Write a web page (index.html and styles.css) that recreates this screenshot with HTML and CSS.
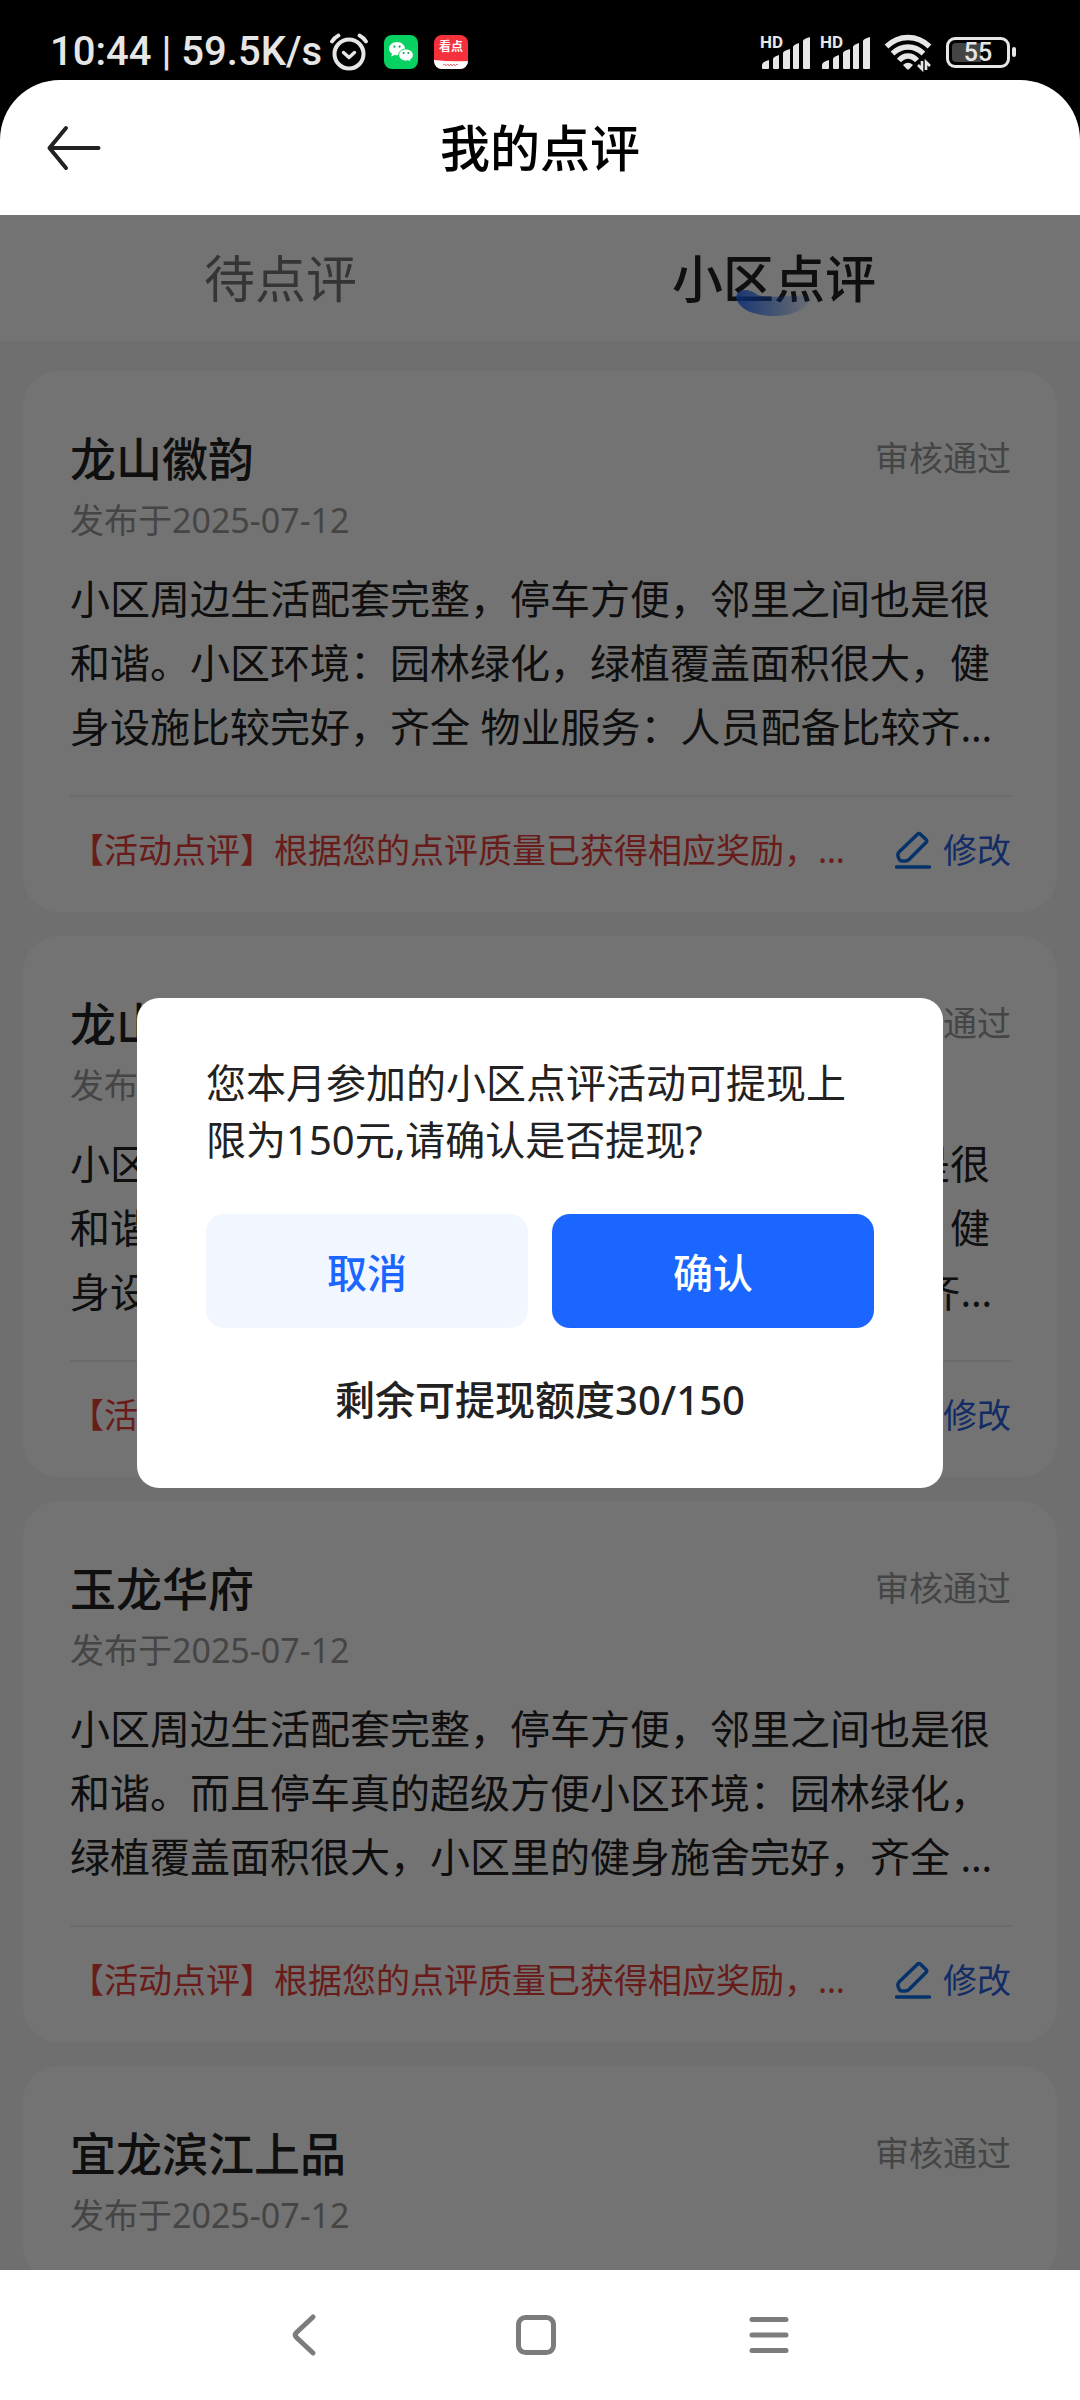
FILE: index.html
```html
<!DOCTYPE html>
<html lang="zh-CN">
  <head>
    <meta charset="UTF-8" />
    <meta name="viewport" content="width=device-width, initial-scale=1.0" />
    <title>我的点评</title>
    <link rel="stylesheet" href="styles.css">
  </head>
  <body>
    <div class="status-bar">
      <div class="status-left">
        <span class="clock">10:44 | 59.5K/s</span>
        <svg class="alarm" viewBox="0 0 40 38" width="40" height="38">
          <g fill="none" stroke="#e6e6e6" stroke-linecap="round" stroke-linejoin="round">
            <circle cx="20" cy="21" r="14.5" stroke-width="4" />
            <path d="M14.5 19.5l5.5 5 5.5-5" stroke-width="3.4" />
            <path d="M3 8.5Q5.5 4.5 9.5 2.5M37 8.5Q34.5 4.5 30.5 2.5" stroke-width="3.8" />
          </g>
        </svg>
        <svg class="app-icon" viewBox="0 0 34 34" width="34" height="34">
          <rect width="34" height="34" rx="8" fill="#07d160" />
          <path d="M13 7C8.600 7 5 9.900 5 13.600c0 2.100 1.200 3.900 3 5.100l-.8 2.800 3.200-1.600c.8.2 1.700.3 2.600.3 4.400 0 8-2.900 8-6.600S17.400 7 13 7z" fill="#fff" />
          <path d="M22 14c-4 0-7.300 2.700-7.300 6s3.300 6 7.300 6c.8 0 1.600-.1 2.300-.3l2.700 1.500-.6-2.500c1.800-1.100 2.900-2.800 2.900-4.700 0-3.300-3.300-6-7.300-6z" fill="#fff" stroke="#07d160" />
          <g fill="#07a04e">
            <circle cx="10.400" cy="11.600" r="1.100" /><circle cx="15.600" cy="11.600" r="1.100" />
            <circle cx="19.600" cy="18" r="1" /><circle cx="24.400" cy="18" r="1" />
          </g>
        </svg>
        <div class="news-icon">
          <span class="news-name">看点</span>
          <svg class="news-strip" viewBox="0 0 34 9" width="34" height="9">
            <path d="M0 0Q17 2 34 1V9H0z" fill="#fff" />
            <path d="M9 5l2-1 1 2 2-2 1 2 2-2 1 2 2-2 1 2 2-2 1 1" fill="none" stroke="#f5767c" />
          </svg>
        </div>
      </div>
      <div class="status-right">
        <svg viewBox="0 0 52 36" width="52" height="36">
          <text class="hd" x="0" y="14">HD</text>
          <g fill="#e6e6e6">
            <path d="M2 34v-3q0-3 7-5v8q0 1-1 1H3q-1 0-1-1z" />
            <path d="M13 34V25q0-2 6-4v13q0 1-1 1h-4q-1 0-1-1z" />
            <path d="M23 34V19q0-2 7-4v19q0 1-1 1h-5q-1 0-1-1z" />
            <path d="M33 34V13q0-2 6-4v25q0 1-1 1h-4q-1 0-1-1z" />
            <path d="M43 34V7q0-2 7-4v31q0 1-1 1h-5q-1 0-1-1z" />
          </g>
        </svg>
        <svg viewBox="0 0 52 36" width="52" height="36">
          <text class="hd" x="0" y="14">HD</text>
          <g fill="#e6e6e6">
            <path d="M2 34v-3q0-3 7-5v8q0 1-1 1H3q-1 0-1-1z" />
            <path d="M13 34V25q0-2 6-4v13q0 1-1 1h-4q-1 0-1-1z" />
            <path d="M23 34V19q0-2 7-4v19q0 1-1 1h-5q-1 0-1-1z" />
            <path d="M33 34V13q0-2 6-4v25q0 1-1 1h-4q-1 0-1-1z" />
            <path d="M43 34V7q0-2 7-4v31q0 1-1 1h-5q-1 0-1-1z" />
          </g>
        </svg>
        <svg class="wifi" viewBox="0 0 48 36" width="48" height="36">
          <g fill="none" stroke="#e6e6e6" stroke-width="5.400">
            <path d="M2.500 12.500Q12 3.500 24 3.500T45.500 12.500" />
            <path d="M8.500 19.500Q15.500 13 24 13T39.500 19.500" />
            <path d="M15 26.500Q19 22 24 22T33 26.500" />
          </g>
          <path d="M19 31q5-4.500 10 0l-4 4.200q-1 .8-2 0z" fill="#e6e6e6" />
          <path d="M38 27v8l-4-4M42 36v-8l4 4" fill="none" stroke="#e6e6e6" stroke-width="2.600" />
        </svg>
        <div class="battery">
          <div class="battery-body"><span class="battery-level">55</span></div>
          <div class="battery-tip"></div>
        </div>
      </div>
    </div>

    <header class="header">
      <button class="back" type="button" aria-label="返回">
        <svg viewBox="0 0 56 46" width="56" height="46">
          <path d="M20 3L3.500 23 20 43M3.500 23H52.500" fill="none" stroke="#222" stroke-width="4" stroke-linecap="round" stroke-linejoin="round" />
        </svg>
      </button>
      <h1>我的点评</h1>
    </header>

    <main class="content">
      <nav class="tabs">
        <button class="tab" type="button">待点评</button>
        <button class="tab active" type="button">小区点评
          <svg class="tab-mark" viewBox="0 0 80 28" width="80" height="28">
            <defs>
              <linearGradient id="mark" x1="0" x2="1">
                <stop offset="0" stop-color="#1a66ff" stop-opacity="0.85" />
                <stop offset="0.5" stop-color="#1a66ff" stop-opacity="0.45" />
                <stop offset="1" stop-color="#1a66ff" stop-opacity="0" />
              </linearGradient>
            </defs>
            <path d="M0 9Q1 1 9 1Q15 1 22 6Q34 10 80 5Q68 27 38 27Q5 26 0 9z" fill="url(#mark)" />
          </svg>
        </button>
      </nav>

      <div class="list">
        <article class="card">
          <div class="card-head">
            <h2>龙山徽韵</h2>
            <span class="state">审核通过</span>
          </div>
          <p class="date">发布于2025-07-12</p>
          <p class="text">小区周边生活配套完整，停车方便，邻里之间也是很和谐。小区环境：园林绿化，绿植覆盖面积很大，健身设施比较完好，齐全 物业服务：人员配备比较齐全，服务态度也很好</p>
          <div class="card-foot">
            <p class="reward">【活动点评】根据您的点评质量已获得相应奖励，感谢您的参与</p>
            <button class="edit" type="button">
              <svg viewBox="0 0 36 38" width="36" height="38">
                <path d="M22.500 3.300q1.500-1.500 3 0l5.500 5.200q1.500 1.500 0 3L14 28.500q-1.500 1.500-4 1.500H7q-2 0-3-2l-1-3q-.5-2 1-4zM1.500 36h33" fill="none" stroke="#0c6fe8" stroke-width="3.500" stroke-linecap="round" stroke-linejoin="round" />
              </svg>
              修改
            </button>
          </div>
        </article>

        <article class="card">
          <div class="card-head">
            <h2>龙山徽韵</h2>
            <span class="state">审核通过</span>
          </div>
          <p class="date">发布于2025-07-12</p>
          <p class="text">小区周边生活配套完整，停车方便，邻里之间也是很和谐。小区环境：园林绿化，绿植覆盖面积很大，健身设施比较完好，齐全 物业服务：人员配备比较齐全，服务态度也很好</p>
          <div class="card-foot">
            <p class="reward">【活动点评】根据您的点评质量已获得相应奖励，感谢您的参与</p>
            <button class="edit" type="button">
              <svg viewBox="0 0 36 38" width="36" height="38">
                <path d="M22.500 3.300q1.500-1.500 3 0l5.500 5.200q1.500 1.500 0 3L14 28.500q-1.500 1.500-4 1.500H7q-2 0-3-2l-1-3q-.5-2 1-4zM1.500 36h33" fill="none" stroke="#0c6fe8" stroke-width="3.500" stroke-linecap="round" stroke-linejoin="round" />
              </svg>
              修改
            </button>
          </div>
        </article>

        <article class="card">
          <div class="card-head">
            <h2>玉龙华府</h2>
            <span class="state">审核通过</span>
          </div>
          <p class="date">发布于2025-07-12</p>
          <p class="text">小区周边生活配套完整，停车方便，邻里之间也是很和谐。而且停车真的超级方便小区环境：园林绿化，绿植覆盖面积很大，小区里的健身施舍完好，齐全 物业服务：人员配备比较齐全</p>
          <div class="card-foot">
            <p class="reward">【活动点评】根据您的点评质量已获得相应奖励，感谢您的参与</p>
            <button class="edit" type="button">
              <svg viewBox="0 0 36 38" width="36" height="38">
                <path d="M22.500 3.300q1.500-1.500 3 0l5.500 5.200q1.500 1.500 0 3L14 28.500q-1.500 1.500-4 1.500H7q-2 0-3-2l-1-3q-.5-2 1-4zM1.500 36h33" fill="none" stroke="#0c6fe8" stroke-width="3.500" stroke-linecap="round" stroke-linejoin="round" />
              </svg>
              修改
            </button>
          </div>
        </article>

        <article class="card">
          <div class="card-head">
            <h2>宜龙滨江上品</h2>
            <span class="state">审核通过</span>
          </div>
          <p class="date">发布于2025-07-12</p>
        </article>
      </div>

      <!-- Withdraw confirmation -->
      <div class="mask">
        <div class="dialog" role="dialog" aria-modal="true">
          <p class="dialog-text">您本月参加的小区点评活动可提现上限为150元,请确认是否提现?</p>
          <div class="dialog-buttons">
            <button class="cancel" type="button">取消</button>
            <button class="confirm" type="button">确认</button>
          </div>
          <p class="quota">剩余可提现额度30/150</p>
        </div>
      </div>
    </main>

    <footer class="system-nav">
      <button type="button" aria-label="后退">
        <svg viewBox="0 0 48 48" width="48" height="48">
          <path d="M34 6L17.500 21.500q-2.500 2.500 0 5L34 42" fill="none" stroke="#7c7c7c" stroke-width="5" stroke-linecap="round" />
        </svg>
      </button>
      <button type="button" aria-label="主页">
        <svg viewBox="0 0 48 48" width="48" height="48">
          <rect x="6.500" y="6.500" width="35" height="35" rx="7" fill="none" stroke="#7c7c7c" stroke-width="5" />
        </svg>
      </button>
      <button type="button" aria-label="菜单">
        <svg viewBox="0 0 48 48" width="48" height="48">
          <path d="M7 8.500h34M7 24h34M7 39.500h34" fill="none" stroke="#7c7c7c" stroke-width="5" stroke-linecap="round" />
        </svg>
      </button>
    </footer>
  </body>
</html>
```

FILE: styles.css
```css
* {
  box-sizing: border-box;
}

body {
  display: flex;
  flex-direction: column;
  height: 100vh;
  margin: 0;
  background-color: #000;
  color: #222;
  font-family: "Noto Sans", "Noto Sans CJK SC", sans-serif;
  font-size: 40px;
}

h1,
h2,
p {
  margin: 0;
}

button {
  padding: 0;
  border: none;
  background: none;
  color: inherit;
  font: inherit;
  cursor: pointer;
}

svg {
  display: block;
}

/* Phone status bar */
.status-bar {
  display: flex;
  justify-content: space-between;
  align-items: center;
  height: 80px;
  padding: 24px 64px 0 50px;
  color: #e6e6e6;
  font-family: Roboto, "Noto Sans CJK SC", sans-serif;
}

.status-left,
.status-right {
  display: flex;
  align-items: center;
}

.clock {
  font-size: 40px;
  font-weight: 500;
  line-height: 48px;
  white-space: nowrap;
}

.alarm {
  margin-left: 7px;
}

.app-icon {
  margin-left: 15px;
}

.news-icon {
  display: flex;
  flex-direction: column;
  justify-content: space-between;
  width: 34px;
  height: 34px;
  margin-left: 16px;
  border-radius: 8px;
  background-color: #f5323c;
  overflow: hidden;
}

.news-name {
  color: #fff;
  font-size: 12px;
  font-weight: 700;
  line-height: 25px;
  text-align: center;
}

.status-right {
  gap: 8px;
}

.status-right svg {
  overflow: visible;
}

.hd {
  fill: #e6e6e6;
  font-size: 17px;
  font-weight: 700;
}

.wifi {
  margin-left: 4px;
}

.battery {
  display: flex;
  align-items: center;
  gap: 2px;
  margin-left: 6px;
}

.battery-body {
  width: 64px;
  height: 31px;
  padding: 3px;
  border: 3px solid #e6e6e6;
  border-radius: 9px;
}

.battery-level {
  display: block;
  border-radius: 4px;
  background: linear-gradient(to right, #444 55%, transparent 55%);
  font-size: 25px;
  font-weight: 500;
  line-height: 19px;
  text-align: center;
}

.battery-tip {
  width: 4px;
  height: 10px;
  border-radius: 2px;
  background-color: #e6e6e6;
}

/* Page header */
.header {
  display: grid;
  grid-template-columns: 1fr auto 1fr;
  align-items: center;
  height: 135px;
  padding: 0 46px;
  border-radius: 60px 60px 0 0;
  background-color: #fff;
}

.back {
  justify-self: start;
}

h1 {
  color: #000;
  font-size: 50px;
  font-weight: 500;
  line-height: 64px;
}

.content {
  position: relative;
  flex: 1;
  min-height: 0;
  background-color: #f7f7f7;
  overflow: hidden;
}

/* Tabs */
.tabs {
  display: flex;
  justify-content: space-between;
  height: 126px;
  padding: 0 204px;
  background-color: #fff;
}

.tab {
  position: relative;
  color: #777;
  font-size: 51px;
  line-height: 64px;
}

.tab.active {
  color: #222;
  font-weight: 500;
}

.tab-mark {
  position: absolute;
  left: 64px;
  bottom: 24px;
}

/* Comment cards */
.list {
  display: flex;
  flex-direction: column;
  gap: 24px;
  padding: 30px 23px;
}

.card {
  padding: 56px 46px 35px 47px;
  border-radius: 36px;
  background-color: #fff;
}

.card-head {
  display: flex;
  justify-content: space-between;
  align-items: center;
  line-height: 62px;
}

h2 {
  font-size: 46px;
  font-weight: 500;
}

.state,
.date {
  color: #999;
  font-size: 34px;
}

.date {
  line-height: 62px;
}

.text {
  display: -webkit-box;
  margin-top: 16px;
  line-height: 64px;
  overflow: hidden;
  -webkit-box-orient: vertical;
  -webkit-line-clamp: 3;
}

.card-foot {
  display: flex;
  align-items: center;
  gap: 32px;
  margin-top: 36px;
  padding-top: 26px;
  border-top: 2px solid #eee;
  font-size: 34px;
  line-height: 54px;
}

.reward {
  flex: 1;
  color: #e8403a;
  white-space: nowrap;
  overflow: hidden;
  text-overflow: ellipsis;
}

.edit {
  display: flex;
  align-items: center;
  gap: 12px;
  color: #2a62e0;
}

/* Dialog */
.mask {
  position: absolute;
  inset: 0;
  display: flex;
  justify-content: center;
  align-items: center;
  background-color: rgba(0, 0, 0, 0.55);
}

.dialog {
  width: 75%;
  max-width: 806px;
  padding: 56px 69px 60px;
  border-radius: 22px;
  background-color: #fff;
}

.dialog-text {
  line-height: 57px;
}

.dialog-buttons {
  display: flex;
  gap: 24px;
  margin: 46px 0 44px;
}

.cancel,
.confirm {
  flex: 1;
  height: 114px;
  border-radius: 18px;
  font-weight: 500;
}

.cancel {
  background-color: #f2f6ff;
  color: #1a66ff;
}

.confirm {
  background-color: #1a66ff;
  color: #fff;
}

.quota {
  font-weight: 500;
  line-height: 56px;
  text-align: center;
}

/* Phone navigation keys */
.system-nav {
  display: flex;
  justify-content: center;
  align-items: center;
  gap: 185px;
  height: 130px;
  padding-right: 8px;
  background-color: #fff;
}
```
